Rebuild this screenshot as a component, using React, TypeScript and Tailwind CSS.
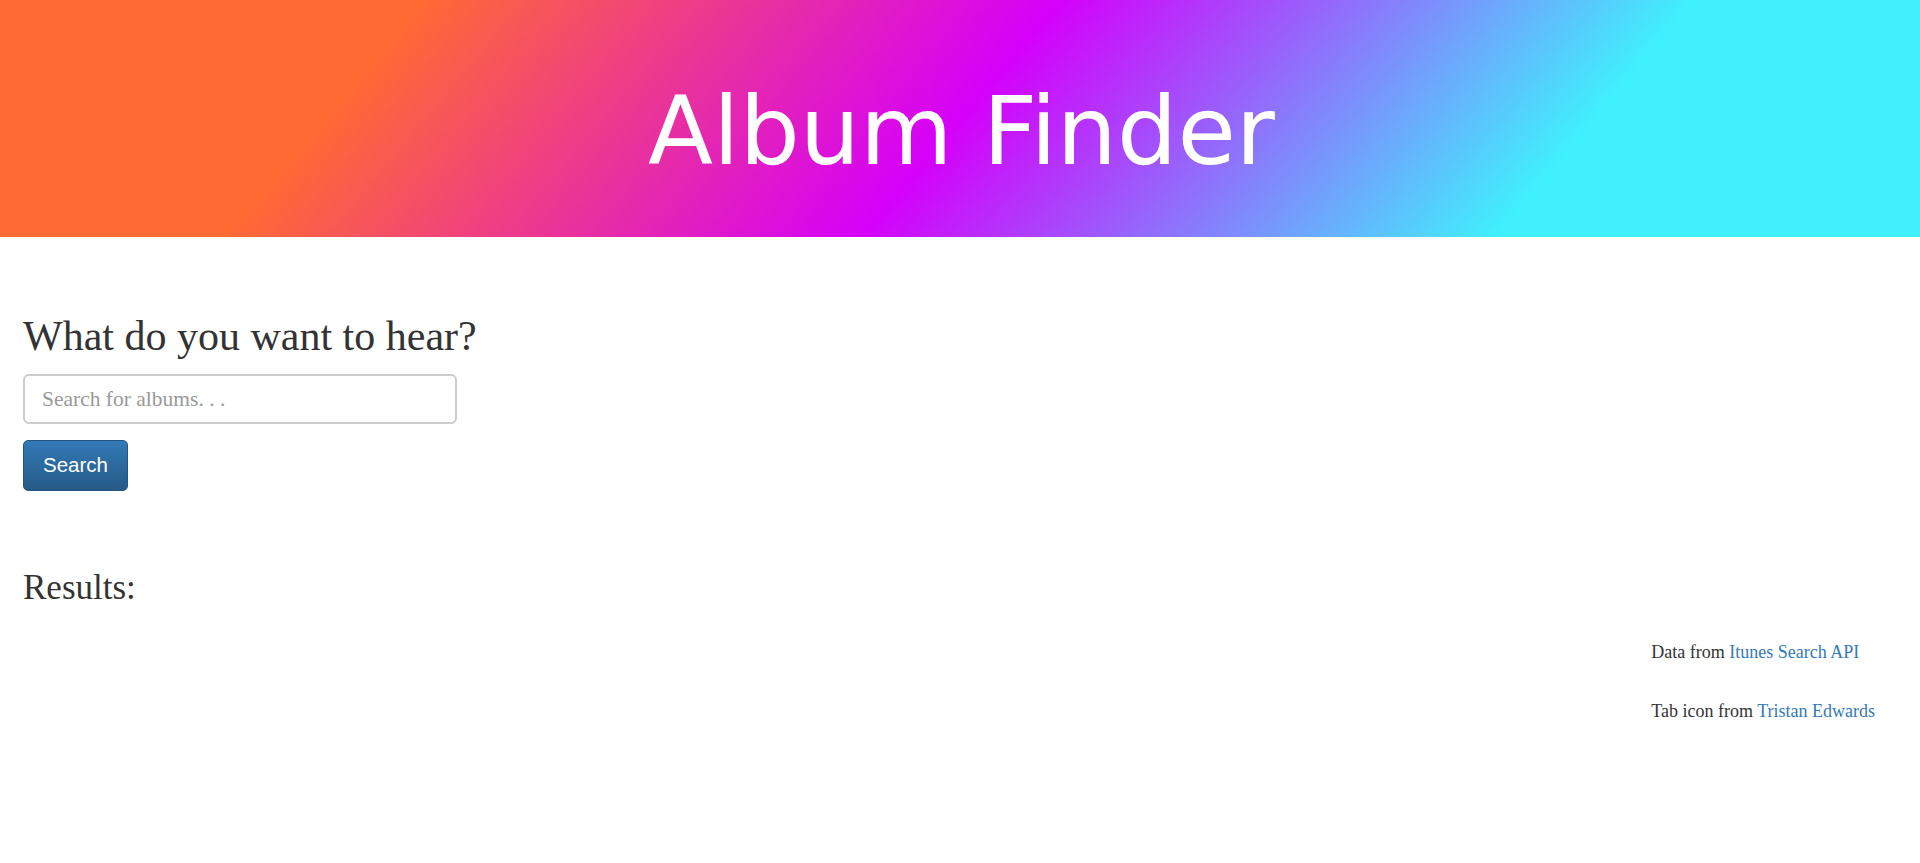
import React from "react";

export default function App() {
  return (
    <div className="min-h-screen bg-white font-['Liberation_Serif',serif] text-[#333]">
      {/* Header */}
      <header className="h-[237px] bg-[linear-gradient(130deg,#ff6a33_20%,#d500fa_50%,#40f0fc_80%)] pt-[84px]">
        <h1 className="pl-[3px] text-center font-['DejaVu_Sans',sans-serif] text-[95px] font-normal leading-none text-white">
          Album Finder
        </h1>
      </header>

      {/* Search */}
      <main className="px-[23px]">
        <h2 className="mt-[76px] text-[42px] leading-[1.1] font-normal">What do you want to hear?</h2>
        <input
          type="text"
          placeholder="Search for albums. . ."
          className="mt-[15px] block h-[50px] w-[434px] rounded-[6px] border-2 border-[#ccc] bg-white px-[17px] text-[21.5px] text-[#555] placeholder:text-[#999] outline-none"
        />
        <button className="mt-[16px] h-[51px] w-[105px] rounded-[5px] border border-[#245580] bg-[linear-gradient(to_bottom,#337ab7,#265a88)] font-['Liberation_Sans',sans-serif] text-[20.5px] text-white">
          Search
        </button>

        <h3 className="mt-[78px] text-[35px] leading-[1.1] font-normal">Results:</h3>
      </main>

      {/* Credits */}
      <footer className="mt-[32px] flex justify-end pr-[45px] text-[18px] leading-[25px]">
        <div className="flex flex-col gap-[34px]">
          <p>
            Data from <a className="text-[#337ab7]" href="#">Itunes Search API</a>
          </p>
          <p>
            Tab icon from <a className="text-[#337ab7]" href="#">Tristan Edwards</a>
          </p>
        </div>
      </footer>
    </div>
  );
}
